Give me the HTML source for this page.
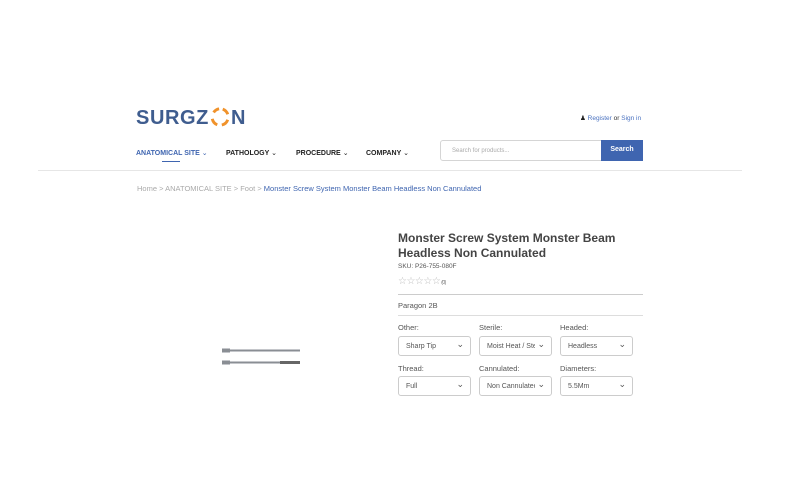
<!DOCTYPE html>
<html><head><style>
*{margin:0;padding:0;box-sizing:border-box}
body{width:800px;height:480px;background:#fff;font-family:"Liberation Sans",sans-serif;position:relative;overflow:hidden;color:#333}
.a{position:absolute;white-space:nowrap}
.logo{left:136px;top:107px;font-size:20px;font-weight:bold;color:#3f5d8f;letter-spacing:0.6px}
.nav{top:149px;font-size:7px;font-weight:bold;color:#222}
.sel{position:absolute;height:20px;border:1px solid #ccc;border-radius:3px;font-size:7px;color:#555;padding:6px 0 0 7px;overflow:hidden}
.sel:after{content:"⌄";position:absolute;right:6px;top:2px;font-size:9px;color:#555;background:#fff;padding-left:2px}
.lbl{font-size:7.5px;color:#555}
</style></head><body>
<div class="a logo">SURGZ<svg width="20" height="20" viewBox="0 0 22 22" style="vertical-align:-3px;margin:0 1px"><g fill="none" stroke="#f0922b" stroke-width="3.2"><path d="M4 6 A9 9 0 0 1 10 2"/><path d="M14 2.3 A9 9 0 0 1 19.5 8"/><path d="M19.5 14 A9 9 0 0 1 13 19.8"/><path d="M8 19.6 A9 9 0 0 1 2.5 13"/></g></svg>N</div>
<div class="a" style="left:580px;top:114px;font-size:6.5px;color:#4a72c0"><span style="color:#222">&#9823;</span> Register <span style="color:#333">or</span> Sign in</div>
<div class="a nav" style="left:136px;color:#3f65b0">ANATOMICAL SITE <span style="font-weight:normal">⌄</span></div>
<div class="a" style="left:162px;top:161px;width:18px;height:1px;background:#3f65b0"></div>
<div class="a nav" style="left:226px">PATHOLOGY <span style="font-weight:normal">⌄</span></div>
<div class="a nav" style="left:296px">PROCEDURE <span style="font-weight:normal">⌄</span></div>
<div class="a nav" style="left:366px">COMPANY <span style="font-weight:normal">⌄</span></div>
<div class="a" style="left:440px;top:140px;width:162px;height:21px;border:1px solid #d5d5d5;border-radius:3px 0 0 3px;font-size:6px;color:#aaa;padding:7px 0 0 11px">Search for products...</div>
<div class="a" style="left:601px;top:140px;width:42px;height:21px;background:#3f65b0;color:#fff;font-size:7px;font-weight:bold;text-align:center;padding-top:6px">Search</div>
<div class="a" style="left:38px;top:170px;width:704px;height:1px;background:#e6e6e6"></div>
<div class="a" style="left:137px;top:184px;font-size:7.5px;color:#aaa">Home &gt; ANATOMICAL SITE &gt; Foot &gt; <span style="color:#3f65b0">Monster Screw System Monster Beam Headless Non Cannulated</span></div>
<svg class="a" style="left:222px;top:347px" width="80" height="22"><rect x="2" y="2.5" width="76" height="2" fill="#8a8e94"/><rect x="0" y="1.5" width="8" height="4" fill="#8a8e94"/><rect x="2" y="14.5" width="76" height="2" fill="#8a8e94"/><rect x="0" y="13.5" width="8" height="4" fill="#8a8e94"/><rect x="58" y="14" width="20" height="3" fill="#666"/></svg>
<div class="a" style="left:398px;top:231px;font-size:12px;font-weight:bold;color:#444;line-height:15px">Monster Screw System Monster Beam<br>Headless Non Cannulated</div>
<div class="a" style="left:398px;top:263px;font-size:6.5px;color:#555">SKU: P26-755-080F</div>
<div class="a" style="left:398px;top:276px;font-size:10px;color:#bbb;letter-spacing:-0.5px">☆☆☆☆☆<span style="font-size:5px;color:#666"> (0)</span></div>
<div class="a" style="left:398px;top:294px;width:245px;height:1px;background:#ccc"></div>
<div class="a" style="left:398px;top:301px;font-size:7.5px;color:#555">Paragon 2B</div>
<div class="a" style="left:398px;top:315px;width:245px;height:1px;background:#ddd"></div>
<div class="a lbl" style="left:398px;top:323px">Other:</div>
<div class="a lbl" style="left:479px;top:323px">Sterile:</div>
<div class="a lbl" style="left:560px;top:323px">Headed:</div>
<div class="sel" style="left:398px;top:336px;width:73px">Sharp Tip</div>
<div class="sel" style="left:479px;top:336px;width:73px">Moist Heat / Stea</div>
<div class="sel" style="left:560px;top:336px;width:73px">Headless</div>
<div class="a lbl" style="left:398px;top:364px">Thread:</div>
<div class="a lbl" style="left:479px;top:364px">Cannulated:</div>
<div class="a lbl" style="left:560px;top:364px">Diameters:</div>
<div class="sel" style="left:398px;top:376px;width:73px">Full</div>
<div class="sel" style="left:479px;top:376px;width:73px">Non Cannulated</div>
<div class="sel" style="left:560px;top:376px;width:73px">5.5Mm</div>
</body></html>
